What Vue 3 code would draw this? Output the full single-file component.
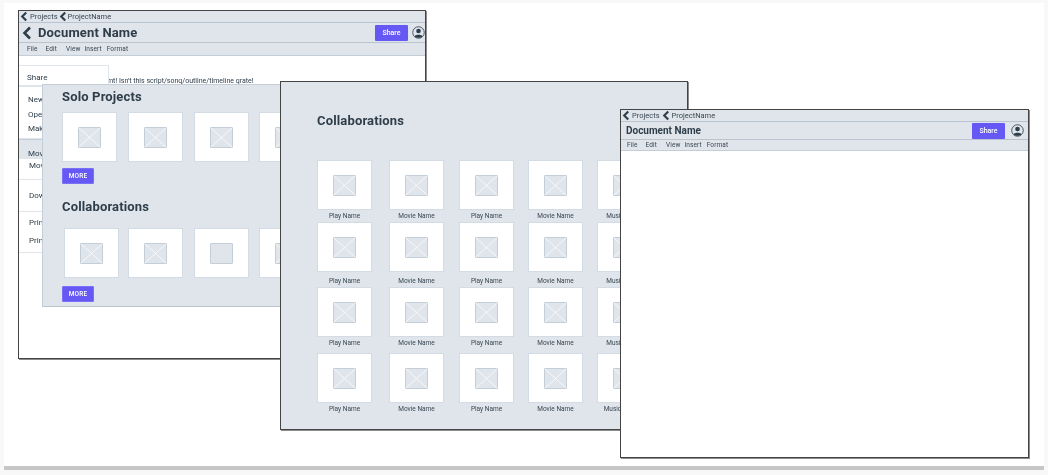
<script setup>
const solo = [0, 1, 2, 3];
const rows = [
  ['Play Name', 'Movie Name', 'Play Name', 'Movie Name', 'Music Name'],
  ['Play Name', 'Movie Name', 'Play Name', 'Movie Name', 'Music Name'],
  ['Play Name', 'Movie Name', 'Play Name', 'Movie Name', 'Music Name'],
  ['Play Name', 'Movie Name', 'Play Name', 'Movie Name', 'Musical Name'],
];
const chevron = 'M7 1 L2.5 5.5 L7 10';
</script>

<template>
  <div class="page">
    <div class="canvas">
      <section class="win win-back">
        <div class="crumbs">
          <svg class="chev" viewBox="0 0 9 11"><path :d="chevron" /></svg>
          <span class="first">Projects</span>
          <svg class="chev" viewBox="0 0 9 11"><path :d="chevron" /></svg>
          <span>ProjectName</span>
        </div>
        <div class="titlebar large">
          <svg class="back" viewBox="0 0 10 14"><path d="M8 1.5 L2.5 7 L8 12.5" /></svg>
          <span class="doc">Document Name</span>
          <button class="share">Share</button>
          <svg class="user" viewBox="0 0 14 14">
            <circle cx="7" cy="7" r="6.2" />
            <circle class="fill" cx="7" cy="5.4" r="2.5" />
            <path class="fill" d="M2.8 11 C3.6 8.8 10.4 8.8 11.2 11 C9.5 13.3 4.5 13.3 2.8 11 Z" />
          </svg>
        </div>
        <nav class="menu">
          <span>File</span><span class="m2">Edit</span><span class="m3">View</span><span>Insert</span><span class="m5">Format</span>
        </nav>
        <p class="doc-text">Documemt! Isn't this script/song/outline/timeline grate!</p>
        <div class="dropdown">
          <div class="dd-share">Share</div>
          <div class="dd-group g1">
            <div>New</div>
            <div>Open</div>
            <div>Make</div>
          </div>
          <div class="dd-hl">Move</div>
          <div class="dd-group g2"><div>Move</div></div>
          <div class="dd-group g3"><div>Download</div></div>
          <div class="dd-group g4">
            <div>Print</div>
            <div>Print</div>
          </div>
        </div>
      </section>

      <section class="panel-solo">
        <h2 class="h-solo">Solo Projects</h2>
        <div class="strip">
          <div v-for="i in solo" :key="i" class="card">
            <span class="ph"><svg viewBox="0 0 22 20" preserveAspectRatio="none"><path d="M0 0 L22 20 M22 0 L0 20" /></svg></span>
          </div>
        </div>
        <button class="more">MORE</button>
        <h2 class="h-collab">Collaborations</h2>
        <div class="strip strip-b">
          <div v-for="i in solo" :key="i" class="card">
            <span class="ph"><svg v-if="i !== 2" viewBox="0 0 22 20" preserveAspectRatio="none"><path d="M0 0 L22 20 M22 0 L0 20" /></svg></span>
          </div>
        </div>
        <button class="more more-b">MORE</button>
      </section>

      <section class="win win-collab">
        <h2 class="h-big">Collaborations</h2>
        <div class="grid">
          <template v-for="(row, r) in rows" :key="r">
            <div v-for="(name, c) in row" :key="c" class="cell" :class="{ 'low-label': r === 1 }">
              <div class="card">
                <span class="ph"><svg viewBox="0 0 22 20" preserveAspectRatio="none"><path d="M0 0 L22 20 M22 0 L0 20" /></svg></span>
              </div>
              <div class="label">{{ name }}</div>
            </div>
          </template>
        </div>
      </section>

      <section class="win win-front">
        <div class="crumbs">
          <svg class="chev" viewBox="0 0 9 11"><path :d="chevron" /></svg>
          <span class="first">Projects</span>
          <svg class="chev" viewBox="0 0 9 11"><path :d="chevron" /></svg>
          <span>ProjectName</span>
        </div>
        <div class="titlebar">
          <span class="doc">Document Name</span>
          <button class="share">Share</button>
          <svg class="user" viewBox="0 0 14 14">
            <circle cx="7" cy="7" r="6.2" />
            <circle class="fill" cx="7" cy="5.4" r="2.5" />
            <path class="fill" d="M2.8 11 C3.6 8.8 10.4 8.8 11.2 11 C9.5 13.3 4.5 13.3 2.8 11 Z" />
          </svg>
        </div>
        <nav class="menu">
          <span>File</span><span class="m2">Edit</span><span class="m3">View</span><span>Insert</span><span class="m5">Format</span>
        </nav>
      </section>
    </div>
    <div class="rule"></div>
  </div>
</template>

<style>
html, body {
  margin: 0;
  background: #fff;
}
</style>

<style scoped>
.page {
  width: 1048px;
  height: 475px;
  overflow: hidden;
  background: #f8f8f8;
  font-family: Roboto, "Liberation Sans", sans-serif;
  color: #2e3d49;
  padding: 3px 4px 0;
  box-sizing: border-box;
  filter: blur(0.3px);
}
.canvas {
  position: relative;
  height: 463px;
  background: #fff;
}
.rule {
  height: 4px;
  background: #c6c6c6;
}
.win {
  position: absolute;
  box-sizing: border-box;
  border: 1px solid #444;
  box-shadow: 1px 1px 0 rgba(0, 0, 0, 0.45);
  background: #fff;
  overflow: hidden;
}
.win-back {
  left: 14px;
  top: 7px;
  width: 408px;
  height: 349px;
}
.win-collab {
  left: 276px;
  top: 78px;
  width: 408px;
  height: 349px;
  background: #dfe5eb;
  padding: 29px 0 0 36px;
}
.win-front {
  left: 616px;
  top: 106px;
  width: 409px;
  height: 349px;
}
.crumbs {
  height: 11px;
  display: flex;
  align-items: center;
  gap: 1px;
  padding-left: 1px;
  background: #dfe5eb;
  border-bottom: 1px solid #b9c4d0;
  font-size: 7.5px;
  color: #3a4753;
}
.crumbs .first {
  margin-left: 1px;
}
.chev {
  width: 8px;
  height: 11px;
  flex: none;
}
.chev path {
  fill: none;
  stroke: #2e3d49;
  stroke-width: 2.4;
}
.titlebar {
  height: 19px;
  display: flex;
  align-items: center;
  padding: 0 0 0 3px;
  background: #dfe5eb;
  border-bottom: 1px solid #b9c4d0;
}
.back {
  width: 10px;
  height: 14px;
  margin-right: 6px;
  flex: none;
}
.back path {
  fill: none;
  stroke: #2e3d49;
  stroke-width: 2.6;
}
.doc {
  font-size: 13px;
  font-weight: 700;
  letter-spacing: 0.15px;
  flex: 1;
}
.share {
  width: 33px;
  height: 16px;
  border: none;
  border-radius: 1px;
  padding: 0;
  background: #6558f5;
  color: #fff;
  font: 500 7px Roboto, sans-serif;
  margin-right: 4px;
}
.user {
  width: 13px;
  height: 13px;
  flex: none;
}
.user circle {
  fill: none;
  stroke: #2e3d49;
  stroke-width: 0.9;
}
.user .fill {
  fill: #2e3d49;
  stroke: none;
}
.menu {
  height: 12px;
  display: flex;
  align-items: center;
  gap: 4px;
  padding-left: 8px;
  background: #dfe5eb;
  border-bottom: 1px solid #c3ced9;
  font-size: 6.5px;
  letter-spacing: 0.1px;
  color: #3a4753;
}
.menu .m2 {
  margin: 0 4px;
}
.menu .m3 {
  margin-left: 1px;
}
.menu .m5 {
  margin-left: 1px;
}
.win-front .crumbs {
  gap: 2px;
}
.win-front .crumbs .first {
  margin-left: 0;
}
.win-front .titlebar {
  height: 17px;
  padding: 0 4px 0 5px;
}
.win-front .doc {
  font-size: 10px;
  letter-spacing: 0;
}
.win-front .share {
  margin-right: 6px;
}
.win-front .menu {
  height: 10px;
  padding-left: 6px;
}
.doc-text {
  position: absolute;
  left: 62px;
  top: 66px;
  margin: 0;
  font-size: 7px;
  white-space: nowrap;
  color: #2e3d49;
}
.dropdown {
  position: absolute;
  left: 0;
  top: 54px;
  width: 100%;
  font-size: 8px;
}
.dd-share {
  width: 81px;
  height: 19px;
  padding-left: 8px;
  line-height: 23px;
  border: 1px solid #dfe5eb;
  border-left: none;
  background: #fff;
}
.dd-group {
  padding-left: 10px;
  border-bottom: 1px solid #dfe5eb;
}
.g1 {
  height: 53px;
  padding-top: 6px;
  padding-left: 9px;
  box-sizing: border-box;
  border-top: 1px solid #dfe5eb;
  line-height: 14.5px;
}
.dd-hl {
  height: 20px;
  padding-left: 9px;
  line-height: 27px;
  background: #dfe5eb;
  border-top: 1px solid #c3ced9;
  box-sizing: border-box;
}
.g2 {
  height: 20px;
  line-height: 13px;
}
.g3 {
  height: 32px;
  box-sizing: border-box;
  line-height: 32px;
}
.g4 {
  height: 41px;
  box-sizing: border-box;
  padding-top: 2px;
  line-height: 18px;
}
.panel-solo {
  position: absolute;
  left: 38px;
  top: 81px;
  width: 320px;
  height: 223px;
  box-sizing: border-box;
  background: #dfe5eb;
  border: 1px solid #c3ced9;
  border-bottom-color: #b9c4d0;
  padding-left: 19px;
  overflow: hidden;
}
h2 {
  margin: 0;
  font-weight: 700;
  letter-spacing: 0.15px;
}
.h-solo,
.h-collab,
.h-big {
  font-size: 13px;
  line-height: 20px;
}
.h-solo {
  margin-top: 2px;
}
.h-collab {
  margin-top: 13px;
}
.strip {
  margin-top: 5px;
  display: grid;
  grid-template-columns: 66px 66px 65px 55px;
}
.strip-b {
  margin-top: 11px;
  margin-left: 2px;
  grid-template-columns: 64px 66px 65px 55px;
}
.card {
  width: 55px;
  height: 50px;
  box-sizing: border-box;
  background: #fff;
  border: 1px solid #d3dce5;
  display: flex;
  align-items: center;
  justify-content: center;
}
.ph {
  width: 23px;
  height: 21px;
  box-sizing: border-box;
  display: block;
  background: #dfe5eb;
  border: 1px solid #c3ced9;
  border-radius: 1px;
}
.ph svg {
  display: block;
  width: 100%;
  height: 100%;
}
.ph path {
  stroke: #fff;
  stroke-width: 0.8;
  fill: none;
}
.more {
  display: block;
  width: 32px;
  height: 16px;
  margin-top: 6px;
  border: 1px solid #7a6ff7;
  border-radius: 1px;
  padding: 0;
  background: #6558f5;
  color: #fff;
  font: 500 6.5px Roboto, sans-serif;
  letter-spacing: 0.2px;
}
.more-b {
  margin-top: 8px;
}
.grid {
  margin-top: 29px;
  display: grid;
  grid-template-columns: 72px 70px 69px 69px 69px;
  grid-template-rows: 62px 65px 66px 66px;
}
.cell {
  width: 55px;
}
.label {
  width: 55px;
  margin-top: 2px;
  text-align: center;
  white-space: nowrap;
  font-size: 6.5px;
  line-height: 9px;
  color: #3a4753;
}
.low-label .label {
  margin-top: 5px;
}
</style>
